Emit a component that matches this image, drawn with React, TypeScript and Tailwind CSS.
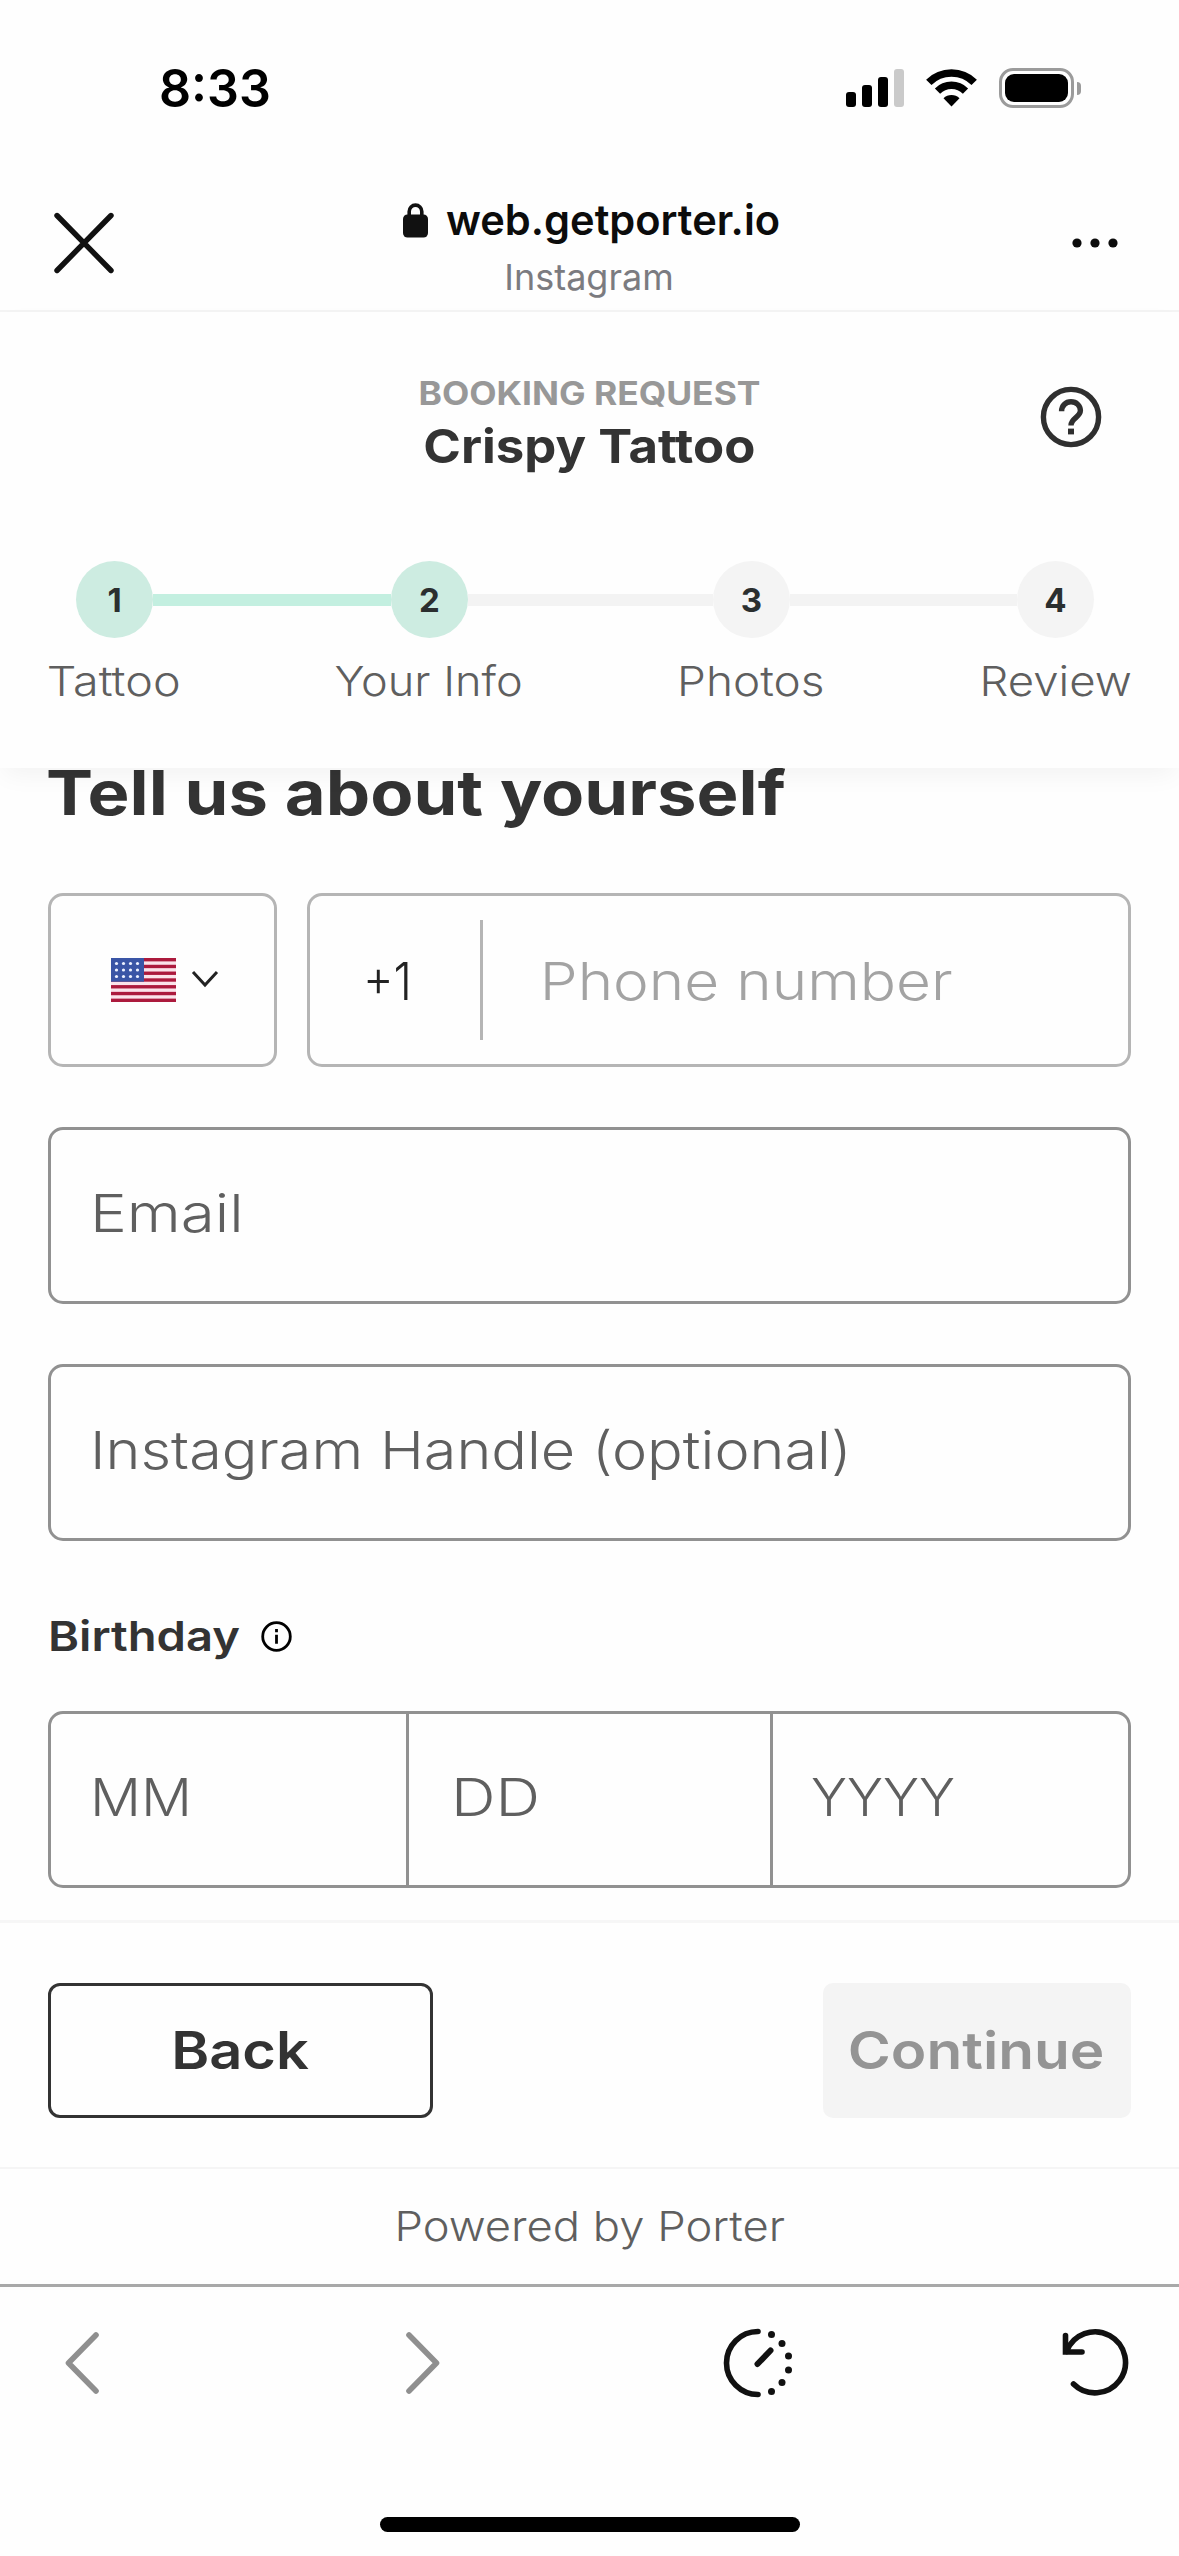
import type { ReactNode } from 'react';

function StatusBar() {
  return (
    <div className="flex h-[176px] items-center justify-between pr-[98px] pl-[159px] text-black">
      <span className="mt-px origin-left scale-x-[0.965] text-[52px] leading-none font-semibold">8:33</span>
      <div className="flex items-center">
        <div className="flex h-[38px] items-end gap-[6px]">
          <div className="h-[15px] w-[10px] rounded-[3px] bg-black" />
          <div className="h-[22px] w-[10px] rounded-[3px] bg-black" />
          <div className="h-[30px] w-[10px] rounded-[3px] bg-black" />
          <div className="h-[38px] w-[10px] rounded-[3px] bg-[#cacaca]" />
        </div>
        <svg className="ml-[22px]" width="51" height="38" viewBox="0 0 51 38" fill="none">
          <path d="M2.8 13.4a32.1 32.1 0 0 1 45.4 0" stroke="#000" strokeWidth="7.6" />
          <path d="M11.5 22.1a19.8 19.8 0 0 1 28 0" stroke="#000" strokeWidth="7.4" />
          <path d="M25.5 37.5l-8-8.2a11.4 11.4 0 0 1 16 0z" fill="#000" />
        </svg>
        <div className="ml-[22px] flex items-center">
          <div className="h-[40px] w-[75px] rounded-[14px] border-[3px] border-[#9b9b9b] p-[3px]">
            <div className="h-full w-full rounded-[9px] bg-black" />
          </div>
          <div className="ml-[3px] h-[13px] w-[4px] rounded-r-full bg-[#9b9b9b]" />
        </div>
      </div>
    </div>
  );
}

function BrowserHeader() {
  return (
    <div className="flex h-[136px] items-center justify-between border-b-2 border-[#f4f4f4] pr-[61px] pl-[53px]">
      <svg width="62" height="62" viewBox="0 0 62 62" stroke="#111" strokeWidth="5.4" strokeLinecap="round">
        <path d="M4 3.5l54 55M58 3.5l-54 55" />
      </svg>
      <div className="mt-[10px] flex flex-col items-center">
        <div className="flex h-[56px] items-center text-[#0c0c0c]">
          <svg className="mr-[18px]" width="25" height="35" viewBox="0 0 25 35" fill="none">
            <path d="M6.2 14V8.4a6.3 6.3 0 0 1 12.6 0V14" stroke="#111" strokeWidth="3.6" />
            <rect y="11.5" width="25" height="23" rx="4.5" fill="#111" />
          </svg>
          <span className="origin-left scale-x-[0.99] text-[42px] leading-none font-semibold">web.getporter.io</span>
        </div>
        <div className="flex h-[56px] items-center pt-px pr-[9px] text-[36px] leading-none text-[#7b7b80]">
          Instagram
        </div>
      </div>
      <svg width="46" height="10" viewBox="0 0 46 10" fill="#0c0c0c">
        <circle cx="5" cy="5" r="4.6" />
        <circle cx="23" cy="5" r="4.6" />
        <circle cx="41" cy="5" r="4.6" />
      </svg>
    </div>
  );
}

function StepDot({ n, done }: { n: number; done?: boolean }) {
  return (
    <div
      className={`flex size-[77px] items-center justify-center rounded-full pt-[2px] text-[33px] leading-none font-bold text-[#2b2f2f] ${
        done ? 'bg-[#cdece1]' : 'bg-[#f4f4f4]'
      }`}
    >
      {n}
    </div>
  );
}

function BookingHeader() {
  return (
    <header className="relative z-10 h-[456px] bg-[#fefefe] px-12 pt-[58px] shadow-[0_10px_24px_-4px_rgba(0,0,0,0.05)]">
      <div className="flex h-[104px] items-center">
        <div className="w-[100px]" />
        <div className="flex flex-1 flex-col items-center">
          <div className="flex h-[47px] scale-x-[1.107] items-center pt-px text-[32px] leading-none font-bold text-[#989898]">
            BOOKING REQUEST
          </div>
          <div className="flex h-[57px] scale-x-[1.083] items-center text-[47px] leading-none font-bold text-[#333]">
            Crispy Tattoo
          </div>
        </div>
        <div className="flex w-[100px] justify-end pr-[29px] pb-[10px]">
          <svg width="62" height="62" viewBox="0 0 62 62" fill="none" stroke="#2f2f2f" strokeWidth="5.4">
            <circle cx="31" cy="31" r="27.6" />
            <path d="M21.6 25.2c0-5.4 4-9.4 9.4-9.4s9.4 3.9 9.4 8.8c0 6.6-9.4 7.6-9.4 14.8" />
            <path d="M31 42.6v5.8" strokeWidth="6" />
          </svg>
        </div>
      </div>
      <div className="mt-[87px] flex items-center pl-[28px]">
        <StepDot n={1} done />
        <div className="h-[12px] w-[238px] bg-[#c3efe0]" />
        <StepDot n={2} done />
        <div className="h-[12px] w-[245px] bg-[#f3f3f3]" />
        <StepDot n={3} />
        <div className="h-[12px] w-[227px] bg-[#f3f3f3]" />
        <StepDot n={4} />
      </div>
      <div className="mt-[23px] flex justify-between text-[41px] leading-none font-light text-[#5f5f5f]">
        <div className="flex w-[131px] justify-center">
          <span className="scale-x-[1.14]">Tattoo</span>
        </div>
        <div className="flex w-[187px] justify-center">
          <span className="scale-x-[1.1]">Your&nbsp;Info</span>
        </div>
        <div className="flex w-[145px] justify-center">
          <span className="scale-x-[1.12]">Photos</span>
        </div>
        <div className="flex w-[151px] justify-center">
          <span className="scale-x-[1.11]">Review</span>
        </div>
      </div>
    </header>
  );
}

function UsFlag() {
  const stripes = [0, 2, 4, 6, 8, 10, 12];
  return (
    <svg width="65" height="44" viewBox="0 0 65 44">
      <rect width="65" height="44" fill="#fbe3ea" />
      {stripes.map((s) => (
        <rect key={s} y={s * 3.385} width="65" height="3.385" fill="#ac1a3d" />
      ))}
      <rect width="33" height="23.7" fill="#3a55a6" />
      {[5.5, 12.5, 19.5, 26.5].map((x) =>
        [5.5, 12, 18.5].map((y) => <circle key={`${x}-${y}`} cx={x} cy={y} r="1.6" fill="#eef2ff" />),
      )}
    </svg>
  );
}

function Field({ children }: { children: ReactNode }) {
  return (
    <div className="mt-[60px] flex h-[177px] items-center rounded-[15px] border-[3px] border-[#919191] pb-[4px] pl-[39px] text-[52px] leading-none font-light text-[#5f5f5f]">
      {children}
    </div>
  );
}

function BookingForm() {
  return (
    <main className="flow-root h-[1152px] px-12">
      <h1 className="-mt-[6px] -ml-[2px] origin-left scale-x-[1.138] text-[62px] leading-none font-bold whitespace-nowrap text-[#333]">
        Tell us about yourself
      </h1>
      <div className="mt-[69px] flex h-[174px] gap-[30px]">
        <div className="flex w-[229px] items-center rounded-[15px] border-[3px] border-[#b5b5b5] pl-[60px]">
          <UsFlag />
          <svg className="mb-[3px] ml-[15px]" width="28" height="18" viewBox="0 0 28 18" fill="none">
            <path d="M2 2l12 13L26 2" stroke="#222" strokeWidth="3" />
          </svg>
        </div>
        <div className="flex flex-1 items-center rounded-[15px] border-[3px] border-[#b5b5b5] text-[52px] leading-none font-light">
          <div className="w-[170px] pt-[3px] pl-[53px] text-[#222]">
            <span className="inline-block origin-left scale-x-[0.9]">+1</span>
          </div>
          <div className="h-[120px] w-[3px] bg-[#b5b5b5]" />
          <div className="origin-left scale-x-[1.159] pt-[3px] pl-[49px] text-[#a3a3a3]">Phone number</div>
        </div>
      </div>
      <Field>
        <span className="origin-left scale-x-[1.19]">Email</span>
      </Field>
      <Field>
        <span className="origin-left scale-x-[1.141]">Instagram Handle (optional)</span>
      </Field>
      <div className="mt-[75px] flex items-center">
        <span className="flex w-[213px]">
          <span className="origin-left scale-x-[1.15] text-[41px] leading-none font-semibold text-[#333]">
            Birthday
          </span>
        </span>
        <svg width="31" height="31" viewBox="0 0 31 31" fill="none" stroke="#000" strokeWidth="2.8">
          <circle cx="15.5" cy="15.5" r="13.8" />
          <path d="M15.5 13.8v9M15.5 8v3.2" />
        </svg>
      </div>
      <div className="mt-[54px] flex h-[177px] rounded-[15px] border-[3px] border-[#919191] text-[52px] leading-none font-light text-[#5f5f5f]">
        <div className="flex w-[358px] items-center border-r-[3px] border-[#919191] pb-[4px] pl-[39px]">
          <span className="origin-left scale-x-[1.09]">MM</span>
        </div>
        <div className="flex w-[364px] items-center border-r-[3px] border-[#919191] pb-[4px] pl-[42px]">
          <span className="origin-left scale-x-[1.19]">DD</span>
        </div>
        <div className="flex flex-1 items-center pb-[4px] pl-[38px]">
          <span className="origin-left scale-x-[1.04]">YYYY</span>
        </div>
      </div>
    </main>
  );
}

function Actions() {
  return (
    <div className="flex h-[247px] items-start justify-between border-t-[3px] border-[#f6f6f6] px-12 pt-[60px] text-[52px] leading-none font-semibold">
      <button className="flex h-[135px] w-[385px] items-center justify-center rounded-[12px] border-[3px] border-[#333] text-[#333]">
        <span className="scale-x-[1.11]">Back</span>
      </button>
      <button className="flex h-[135px] w-[308px] items-center justify-center rounded-[10px] bg-[#f4f4f4] text-[#949494]">
        <span className="-ml-[2px] scale-x-[1.125]">Continue</span>
      </button>
    </div>
  );
}

function BrowserToolbar() {
  return (
    <div className="flex h-[272px] flex-col items-center border-t-[3px] border-[#a8a8a8]">
      <div className="flex h-[152px] w-full items-center pl-[64px]">
        <svg width="36" height="64" viewBox="0 0 36 64" fill="none" stroke="#8f8f8f" strokeWidth="5.6" strokeLinecap="round" strokeLinejoin="round">
          <path d="M32 4L4.5 32 32 60" />
        </svg>
        <svg className="ml-[305px]" width="36" height="64" viewBox="0 0 36 64" fill="none" stroke="#8f8f8f" strokeWidth="5.6" strokeLinecap="round" strokeLinejoin="round">
          <path d="M4 4l27.5 28L4 60" />
        </svg>
        <svg className="ml-[281px]" width="72" height="72" viewBox="0 0 72 72" fill="none" stroke="#111" strokeWidth="5.6" strokeLinecap="round">
          <path d="M36 4.5a31.5 31.5 0 0 0 0 63" />
          <path d="M35.5 37l13-13.5" strokeWidth="6" />
          <g fill="#111" stroke="none">
            <circle cx="49.5" cy="7.5" r="3.5" />
            <circle cx="60" cy="16.5" r="3.5" />
            <circle cx="66.5" cy="29" r="3.5" />
            <circle cx="66.5" cy="43" r="3.5" />
            <circle cx="60" cy="55.5" r="3.5" />
            <circle cx="49.5" cy="64.5" r="3.5" />
          </g>
        </svg>
        <svg className="ml-[265px]" width="72" height="72" viewBox="0 0 72 72" fill="none" stroke="#111" strokeWidth="5.6" strokeLinecap="round">
          <path d="M7.5 24.5A30.5 30.5 0 1 1 14.5 57" />
          <path d="M6.5 8.5v16.5h16.5" />
        </svg>
      </div>
      <div className="mt-[78px] h-[15px] w-[420px] rounded-full bg-black" />
    </div>
  );
}

export default function App() {
  return (
    <div className="h-[2556px] w-[1179px] overflow-hidden bg-[#fefefe] font-['Inter',sans-serif]">
      <StatusBar />
      <BrowserHeader />
      <BookingHeader />
      <BookingForm />
      <Actions />
      <div className="flex h-[117px] items-center justify-center border-t-2 border-[#f5f5f5] text-[41px] leading-none font-light text-[#5f5f5f]">
        <span className="scale-x-[1.105]">Powered by Porter</span>
      </div>
      <BrowserToolbar />
    </div>
  );
}
